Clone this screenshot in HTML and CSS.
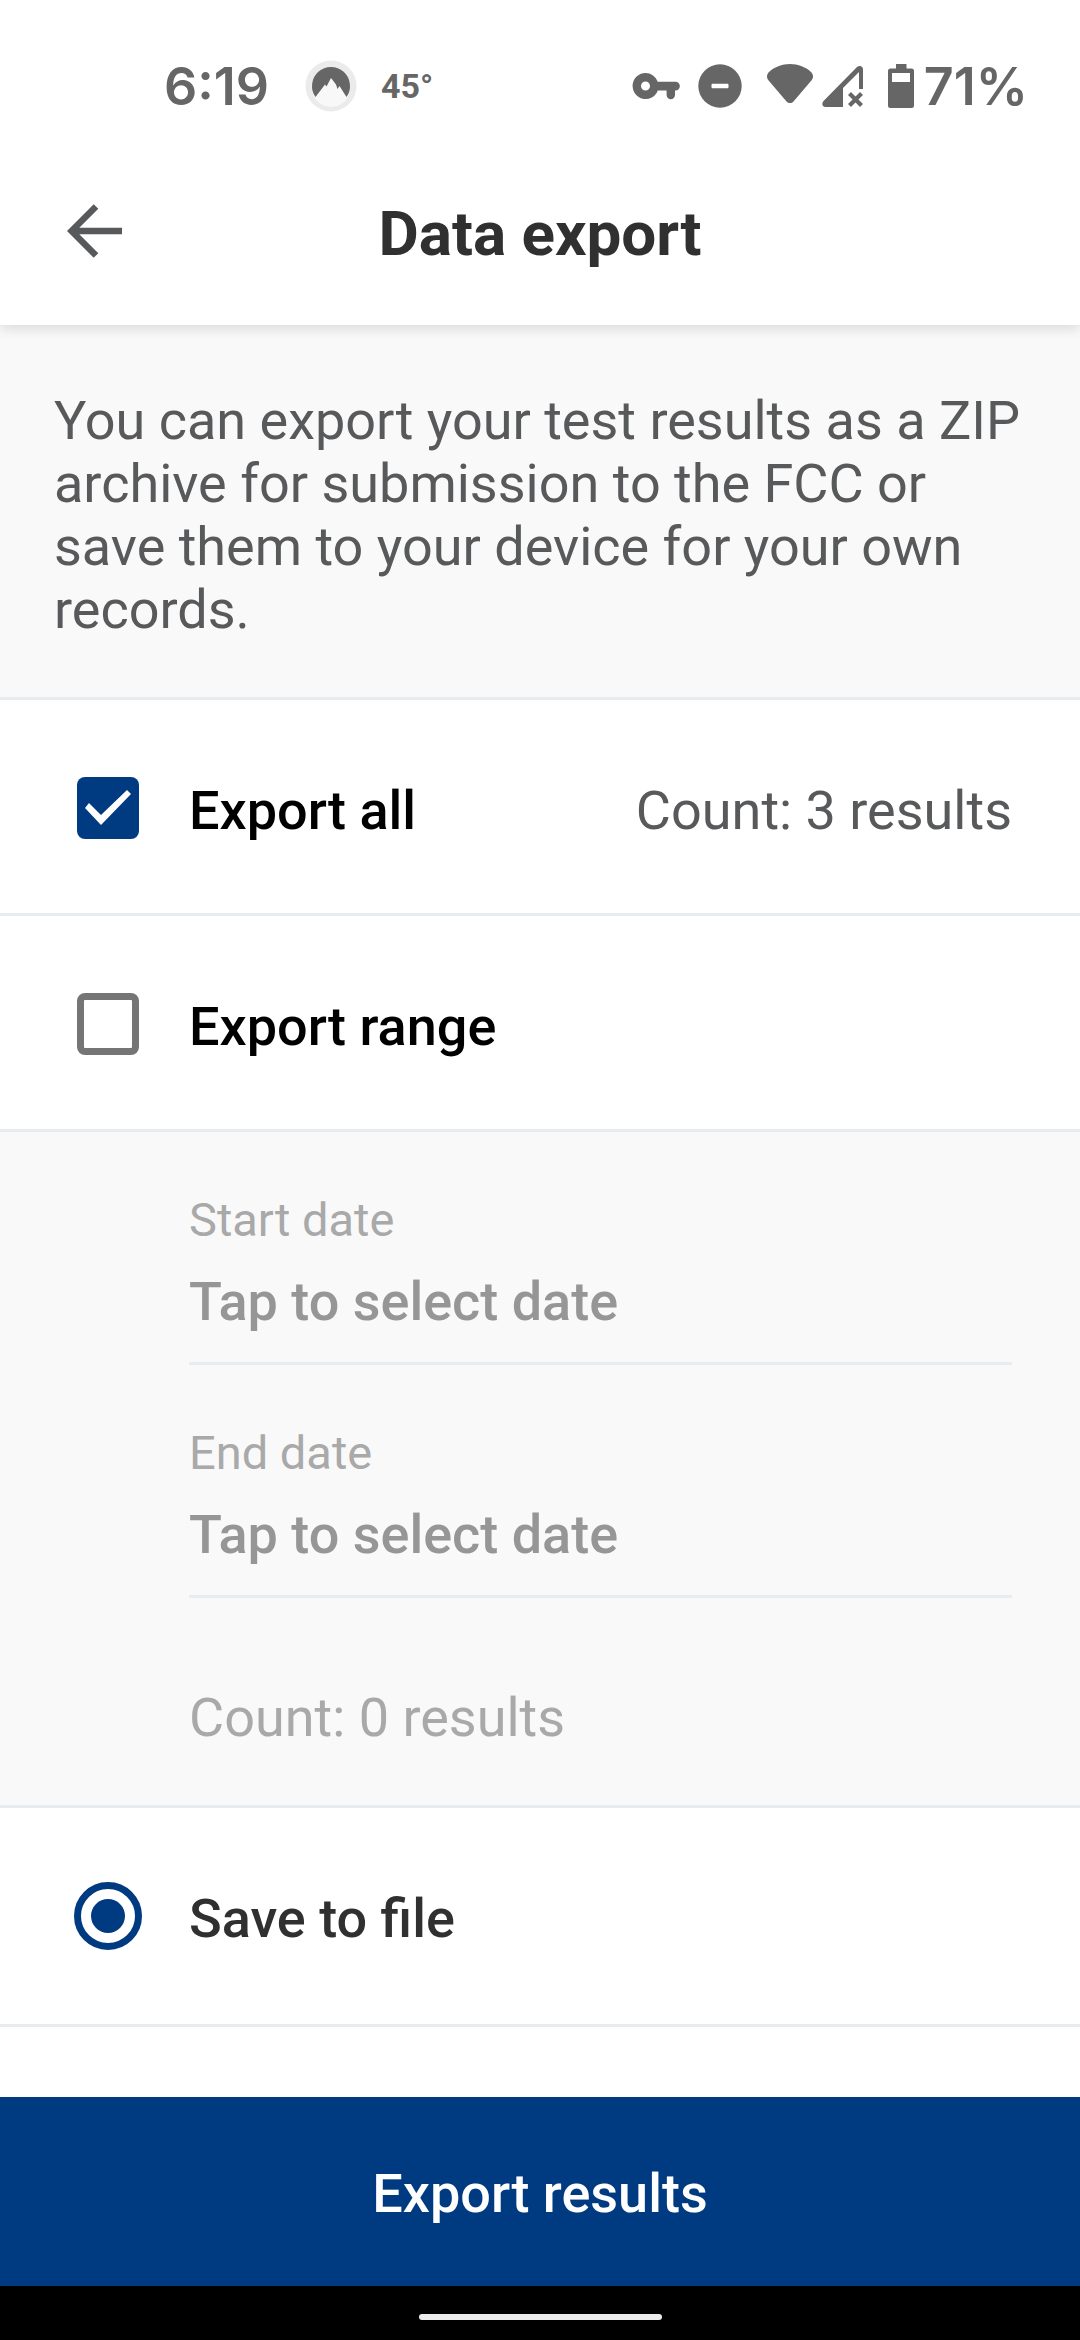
FILE: index.html
```html
<!DOCTYPE html>
<html lang="en">
<head>
<meta charset="utf-8">
<meta name="viewport" content="width=device-width, initial-scale=1">
<title>Data export</title>
<link rel="stylesheet" href="styles.css">
</head>
<body>
<div class="top">
  <div class="status-bar">
    <div class="status-left">
      <span class="status-time">6:19</span>
      <svg class="icon" width="52" height="52" viewBox="0 0 52 52" aria-hidden="true">
        <circle cx="26" cy="26" r="25.500" fill="#ebebeb"/>
        <circle cx="26" cy="28" r="19" fill="#f8f8f8"/>
        <path d="M10.500 37A19 19 0 1 1 41.500 37L34.500 26L32.500 29L31 24.500L26 18L21.500 26.500L20 24.500Z" fill="#666"/>
      </svg>
      <span class="status-temp">45°</span>
    </div>
    <div class="status-right">
      <svg class="icon icon-key" width="48" height="44" viewBox="0 0 48 44" aria-hidden="true">
        <path fill="#666" fill-rule="evenodd" d="M13.500 9a13 13 0 0 1 12.300 8.700H43.500a4.300 4.300 0 0 1 0 8.700H43V31a4.200 4.200 0 0 1-8.400 0v-4.600h-8.800A13 13 0 1 1 13.500 9ZM13.500 17.500a4.500 4.500 0 1 0 0 9a4.500 4.500 0 0 0 0-9Z"/>
      </svg>
      <svg class="icon icon-dnd" width="44" height="44" viewBox="0 0 44 44" aria-hidden="true">
        <circle cx="22" cy="22" r="21.700" fill="#666"/>
        <rect x="13.500" y="19.700" width="17" height="4.600" rx="1" fill="#fff"/>
      </svg>
      <svg class="icon icon-wifi" width="48" height="44" viewBox="0 0 48 44" aria-hidden="true">
        <path fill="#666" d="M2.500 8.500C8 3 16 0 24 0s16 3 21.500 8.500c2 2.500 2 5 .3 7.500L27.500 37.500c-2 2-5 2-7 0L2.200 16C.5 13.500.5 11 2.500 8.500Z"/>
      </svg>
      <svg class="icon icon-signal" width="42" height="44" viewBox="0 0 42 44" aria-hidden="true">
        <path fill="#666" fill-rule="evenodd" d="M35 3c3-2 6-.7 6 2.500V25H37V8L21 24V43H3.500C0 43-.5 39.500 1.500 37Z"/>
        <path stroke="#666" stroke-width="4.200" fill="none" d="M27.500 29.500L39.500 41.500M39.500 29.500L27.500 41.500"/>
      </svg>
      <svg class="icon icon-battery" width="26" height="44" viewBox="0 0 26 44" aria-hidden="true">
        <path fill="#666" fill-rule="evenodd" d="M8 0H18.500V4.500H23.500Q26 4.500 26 7V41.500Q26 44 23.500 44H2.500Q0 44 0 41.500V7Q0 4.500 2.500 4.500H8ZM4 9V18H22V9Z"/>
      </svg>
      <span class="status-charge">71%</span>
    </div>
  </div>

  <header class="app-bar">
    <button class="back" type="button" aria-label="Back">
      <svg class="icon" width="56" height="54" viewBox="0 0 56 54" aria-hidden="true">
        <path d="M55 27H6M29 2.500L4.500 27L29 51.500" fill="none" stroke="#58595b" stroke-width="6.500"/>
      </svg>
    </button>
    <h1 class="title">Data export</h1>
  </header>
</div>

<main class="content">
  <p class="intro">You can export your test results as a ZIP archive for submission to the FCC or save them to your device for your own records.</p>

  <div class="row">
    <input class="check" type="checkbox" id="export-all" checked>
    <label class="row-label" for="export-all">Export all</label>
    <span class="count">Count: 3 results</span>
  </div>
  <div class="row">
    <input class="check" type="checkbox" id="export-range">
    <label class="row-label" for="export-range">Export range</label>
  </div>

  <div class="range">
    <div class="field">
      <label class="field-label" for="start-date">Start date</label>
      <input class="field-value" type="text" id="start-date" value="Tap to select date" disabled>
    </div>
    <div class="field">
      <label class="field-label" for="end-date">End date</label>
      <input class="field-value" type="text" id="end-date" value="Tap to select date" disabled>
    </div>
    <p class="range-count">Count: 0 results</p>
  </div>

  <div class="row row-target">
    <input class="radio" type="radio" name="target" id="save-file" checked>
    <label class="row-label" for="save-file">Save to file</label>
  </div>
</main>

<button class="submit" type="button">Export results</button>
<div class="nav-bar"><div class="nav-handle"></div></div>
</body>
</html>
```
FILE: styles.css
```css
* {
  box-sizing: border-box;
}

body {
  margin: 0;
  min-height: 100vh;
  display: flex;
  flex-direction: column;
  background: #fff;
  color: #58595b;
  font-family: Roboto, "Noto Sans", sans-serif;
  font-size: 54px;
  line-height: 63px;
}

button,
input {
  margin: 0;
  padding: 0;
  border: 0;
  background: none;
  font: inherit;
}

h1,
p {
  margin: 0;
}

.icon {
  display: block;
  flex: none;
}

.top {
  position: relative;
  background: #fff;
  box-shadow: 0 4px 12px rgba(0, 0, 0, 0.12);
}

/* System status bar */
.status-bar {
  display: flex;
  justify-content: space-between;
  align-items: center;
  padding: 36px 52px 0 164px;
  height: 136px;
  color: #666;
}

.status-left,
.status-right {
  display: flex;
  align-items: center;
}

.status-time,
.status-charge {
  font-family: Inter, Roboto, sans-serif;
  font-size: 52px;
  font-weight: 600;
}

.status-time {
  margin-right: 36px;
}

.status-temp {
  margin-left: 24px;
  font-family: "Liberation Sans Narrow", Roboto, sans-serif;
  font-size: 34px;
  font-weight: 700;
}

.icon-dnd {
  margin-left: 18px;
}

.icon-wifi {
  margin-left: 24px;
}

.icon-signal {
  margin-left: 8px;
}

.icon-battery {
  margin: 0 10px 0 24px;
}

/* App bar */
.app-bar {
  display: grid;
  grid-template-columns: 1fr auto 1fr;
  align-items: center;
  height: 189px;
  padding: 0 67px;
}

.back {
  justify-self: start;
}

.title {
  padding-top: 6px;
  color: #303030;
  font-size: 62px;
  font-weight: 700;
  line-height: 72px;
}

.content {
  flex: 1;
}

.intro {
  padding: 64px 40px 56px 54px;
  border-bottom: 3px solid #e9ecef;
  background: #f9f9f9;
}

/* Option rows */
.row {
  display: flex;
  align-items: center;
  min-height: 216px;
  padding: 3px 68px 0 74px;
  border-bottom: 3px solid #e9ecef;
}

.row-label {
  flex: 1;
  padding-top: 4px;
  color: #000;
  font-weight: 500;
}

.row-target {
  min-height: 219px;
  padding-top: 0;
}

.row-target .row-label {
  color: #303030;
}

.count {
  padding-top: 4px;
}

.check,
.radio {
  flex: none;
  appearance: none;
}

.check {
  width: 62px;
  height: 62px;
  margin: 0 50px 0 3px;
  border: 7px solid #757575;
  border-radius: 8px;
}

.check:checked {
  border: 0;
  background: #003b82;
}

.check:checked::before {
  content: "";
  display: block;
  width: 62px;
  height: 62px;
  background: #fff;
  clip-path: polygon(8px 31px, 12px 26px, 24px 38px, 50px 13px, 54px 17px, 24px 48px);
}

.radio {
  display: grid;
  place-items: center;
  width: 68px;
  height: 68px;
  margin-right: 47px;
  border: 7px solid #003b82;
  border-radius: 50%;
}

.radio:checked::before {
  content: "";
  width: 34px;
  height: 34px;
  border-radius: 50%;
  background: #003b82;
}

/* Date range */
.range {
  padding: 0 68px 56px 189px;
  border-bottom: 3px solid #e9ecef;
  background: #f9f9f9;
}

.field {
  display: flex;
  flex-direction: column;
  gap: 21px;
  padding: 59px 0 29px;
  border-bottom: 3px solid #e9ecef;
}

.field-label {
  color: #a9a9aa;
  font-size: 47px;
  line-height: 58px;
}

.field-value {
  width: 100%;
  height: 63px;
  color: #969696;
  font-weight: 500;
}

.range-count {
  padding-top: 88px;
  color: #a9a9aa;
}

/* Bottom action */
.submit {
  min-height: 189px;
  padding-top: 4px;
  background: #003b82;
  color: #fff;
  font-weight: 500;
}

.nav-bar {
  display: flex;
  justify-content: center;
  padding: 28px 0 20px;
  background: #000;
}

.nav-handle {
  width: 243px;
  height: 6px;
  border-radius: 3px;
  background: #ebebeb;
}
```
